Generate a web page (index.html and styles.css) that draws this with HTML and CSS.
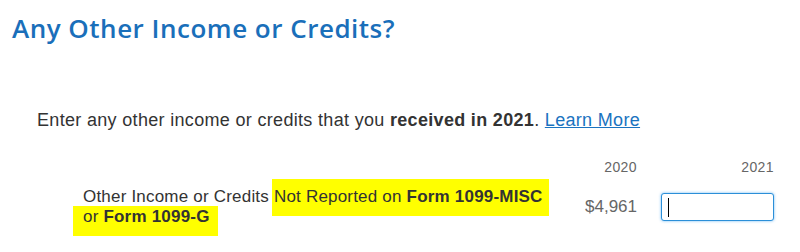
FILE: index.html
```html
<!DOCTYPE html>
<html lang="en">
<head>
<meta charset="utf-8">
<title>Any Other Income or Credits?</title>
<link rel="stylesheet" href="styles.css">
</head>
<body>
<div class="page">
  <h1 class="title">Any Other Income or Credits?</h1>
  <p class="intro">Enter any other income or credits that you <b>received in 2021</b>. <a href="#" class="link">Learn More</a></p>
  <div class="grid">
    <div class="col-head empty"></div>
    <div class="col-head">2020</div>
    <div class="col-head">2021</div>
    <div class="label">Other Income or Credits <span class="hl hl-1">Not Reported on <b>Form 1099-MISC</b></span><br><span class="hl hl-2">or <b>Form 1099-G</b></span></div>
    <div class="prior">$4,961</div>
    <div class="field"><span class="caret"></span></div>
  </div>
</div>
</body>
</html>
```
FILE: styles.css
```css
html, body {
  margin: 0;
  padding: 0;
  background: #ffffff;
}
.page {
  width: 800px;
  height: 252px;
  overflow: hidden;
  font-family: "Liberation Sans", Arial, sans-serif;
  color: #333333;
}
.title {
  margin: 0;
  padding: 11px 0 0 12px;
  font-family: "Open Sans", Lato, sans-serif;
  font-weight: 600;
  font-size: 26px;
  line-height: 34px;
  letter-spacing: 0.5px;
  color: #1a6fba;
}
.intro {
  margin: 65px 0 0 37px;
  font-size: 18px;
  line-height: 21px;
  letter-spacing: 0.32px;
  color: #333333;
}
.intro b {
  font-weight: 700;
}
.link {
  color: #1a73c0;
  text-decoration: underline;
}
.grid {
  display: grid;
  grid-template-columns: 1fr auto 113px;
  column-gap: 24px;
  row-gap: 12px;
  align-items: center;
  margin: 28px 26px 0 83px;
}
.col-head {
  font-size: 14px;
  line-height: 16px;
  letter-spacing: 0.4px;
  color: #666666;
  text-align: right;
}
.label {
  font-size: 17px;
  line-height: 20px;
  letter-spacing: 0.2px;
  color: #333333;
}
.label b {
  font-weight: 700;
}
.hl {
  background: #ffff00;
}
.hl-1 {
  padding: 8px 6px 10px 2px;
  margin-left: -2px;
}
.hl-2 {
  padding: 1px 8px 10px 10px;
  margin-left: -10px;
}
.prior {
  font-size: 17px;
  line-height: 20px;
  color: #666666;
  text-align: right;
}
.field {
  box-sizing: border-box;
  height: 28px;
  border: 1px solid #2b8fd8;
  border-radius: 3px;
  box-shadow: 0 0 3px rgba(80, 170, 240, 0.8);
  background: #ffffff;
  display: flex;
  align-items: center;
  padding-left: 6px;
}
.caret {
  width: 1px;
  height: 19px;
  background: #000000;
}
```
